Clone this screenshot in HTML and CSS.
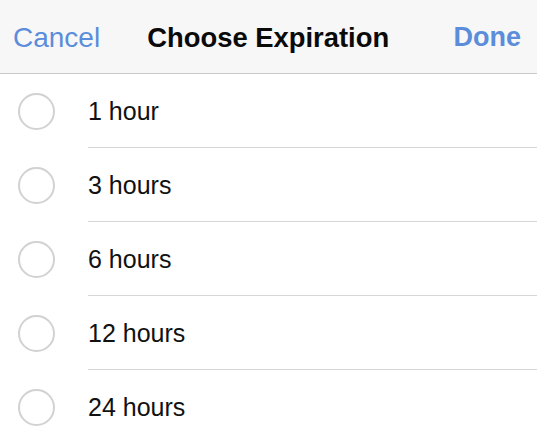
FILE: index.html
```html
<!DOCTYPE html>
<html lang="en">
<head>
    <meta charset="UTF-8">
    <title>Choose Expiration</title>
    <link rel="stylesheet" href="styles.css">
</head>
<body>
    <div class="sheet">
        <!-- Nav bar -->
        <div class="nav-bar">
            <span class="nav-btn cancel">Cancel</span>
            <span class="nav-title">Choose Expiration</span>
            <span class="nav-btn done">Done</span>
        </div>

        <ul class="option-list">
            <li class="option"><span class="radio"></span><span class="label">1 hour</span></li>
            <li class="option"><span class="radio"></span><span class="label">3 hours</span></li>
            <li class="option"><span class="radio"></span><span class="label">6 hours</span></li>
            <li class="option"><span class="radio"></span><span class="label">12 hours</span></li>
            <li class="option"><span class="radio"></span><span class="label">24 hours</span></li>
        </ul>
    </div>
</body>
</html>
```

FILE: styles.css
```css
body {
    margin: 0;
    background-color: #ffffff;
    font-family: 'Liberation Sans', Arial, sans-serif;
    color: #111111;
}

.sheet {
    width: 537px;
}

.nav-bar {
    display: flex;
    align-items: center;
    height: 74px;
    padding: 2px 16px 0 13px;
    box-sizing: border-box;
    background-color: #f7f7f8;
    border-bottom: 1px solid #c9c9cb;
}

.nav-btn {
    font-size: 28px;
    color: #5b8ddb;
}

.done {
    margin-left: auto;
    font-size: 27px;
    font-weight: bold;
}

.nav-title {
    margin-left: 47px;
    font-size: 27.4px;
    font-weight: bold;
    color: #0a0a0a;
}

.option-list {
    list-style: none;
    margin: 0;
    padding: 0;
}

.option {
    display: flex;
    align-items: center;
    height: 74px;
}

.radio {
    flex: none;
    width: 33px;
    height: 33px;
    margin: 0 33px 0 18px;
    border: 2px solid #d2d2d2;
    border-radius: 50%;
}

.label {
    flex: 1;
    align-self: stretch;
    display: flex;
    align-items: center;
    padding-top: 2px;
    font-size: 25px;
    border-bottom: 1px solid #d6d6d6;
}
```
